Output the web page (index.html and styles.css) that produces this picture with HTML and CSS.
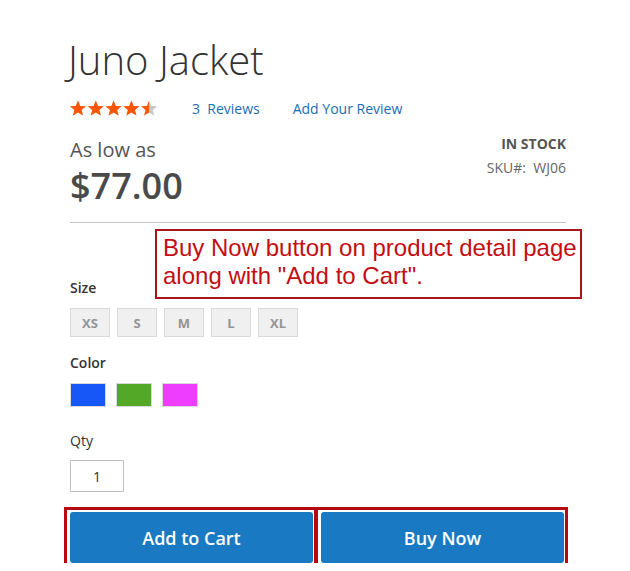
FILE: index.html
```html
<!DOCTYPE html>
<html lang="en">
<head>
    <meta charset="UTF-8">
    <meta name="viewport" content="width=device-width, initial-scale=1.0">
    <title>Juno Jacket</title>
    <link rel="stylesheet" href="styles.css">
</head>
<body>
    <div class="product">
        <h1 class="title">Juno Jacket</h1>

        <div class="reviews">
            <svg class="stars" width="90" height="16" viewBox="0 0 90 16">
                <defs>
                    <polygon id="star" points="9,0.5 11.2,5.9 17,6.2 12.5,9.9 14.1,15.6 9,12.4 3.9,15.6 5.5,9.9 1,6.2 6.8,5.9"/>
                    <clipPath id="rating"><rect x="0" y="0" width="80" height="16"/></clipPath>
                </defs>
                <g fill="#c7c7c7">
                    <use href="#star" x="0"/><use href="#star" x="17.8"/><use href="#star" x="35.6"/><use href="#star" x="53.4"/><use href="#star" x="71.2"/>
                </g>
                <g fill="#ff5501" clip-path="url(#rating)">
                    <use href="#star" x="0"/><use href="#star" x="17.8"/><use href="#star" x="35.6"/><use href="#star" x="53.4"/><use href="#star" x="71.2"/>
                </g>
            </svg>
            <a href="#" class="link">3&nbsp; Reviews</a>
            <a href="#" class="link">Add Your Review</a>
        </div>

        <div class="info">
            <div class="price-box">
                <div class="price-label">As low as</div>
                <div class="price">$77.00</div>
            </div>
            <div class="stock">
                <div class="stock-status">IN STOCK</div>
                <div class="sku">SKU#:&nbsp; WJ06</div>
            </div>
        </div>

        <div class="options">
            <div class="label">Size</div>
            <div class="sizes">
                <span class="size">XS</span>
                <span class="size">S</span>
                <span class="size">M</span>
                <span class="size">L</span>
                <span class="size">XL</span>
            </div>

            <div class="label">Color</div>
            <div class="colors">
                <span class="color blue"></span>
                <span class="color green"></span>
                <span class="color pink"></span>
            </div>

            <div class="label qty-label">Qty</div>
            <input class="qty" type="text" value="1">
        </div>

        <div class="actions">
            <button class="btn marked">Add to Cart</button>
            <button class="btn marked">Buy Now</button>
        </div>

        <div class="note">Buy Now button on product detail page along with "Add to Cart".</div>
    </div>
</body>
</html>
```

FILE: styles.css
```css
body {
    margin: 0;
    font-family: "Open Sans", Arial, sans-serif;
    color: #333;
    background: #fff;
}
.product {
    position: relative;
    width: 496px;
    padding: 38px 0 0 70px;
}
.title {
    margin: 0 0 0 -2px;
    font-size: 40px;
    font-weight: 300;
    line-height: 44px;
    color: #333;
}
.reviews {
    display: flex;
    align-items: center;
    margin-top: 18px;
    height: 16px;
}
.stars {
    display: block;
    margin-left: -1px;
    margin-right: 33px;
}
.link {
    color: #1a6eb3;
    text-decoration: none;
    font-size: 14px;
    margin-right: 33px;
}
.info {
    display: flex;
    justify-content: space-between;
    margin-top: 16px;
    padding-bottom: 14px;
    border-bottom: 1px solid #c6c6c6;
}
.price-box {
    padding-top: 5px;
}
.price-label {
    font-size: 20px;
    line-height: 26px;
    color: #555;
}
.price {
    font-size: 36px;
    font-weight: 600;
    line-height: 44px;
    color: #4a4a4a;
    margin-top: 1px;
}
.stock {
    text-align: right;
    font-size: 14px;
    color: #666;
    padding-top: 2px;
}
.stock-status {
    font-weight: 700;
    color: #555;
    line-height: 20px;
}
.sku {
    line-height: 20px;
    margin-top: 4px;
}
.options {
    padding-top: 55px;
}
.label {
    font-size: 14px;
    font-weight: 600;
    line-height: 20px;
}
.sizes {
    display: flex;
    gap: 7px;
    margin: 10px 0 16px;
}
.size {
    box-sizing: border-box;
    width: 40px;
    height: 29px;
    border: 1px solid #dadada;
    background: #f0f0f0;
    color: #949494;
    font-size: 13px;
    font-weight: 700;
    display: flex;
    align-items: center;
    justify-content: center;
}
.colors {
    display: flex;
    gap: 10px;
    margin: 10px 0 24px;
}
.color {
    box-sizing: border-box;
    width: 36px;
    height: 24px;
    border: 1px solid #dadada;
}
.blue { background: #1857f7; }
.green { background: #53a828; }
.pink { background: #ef3dff; }
.qty-label {
    font-weight: 400;
}
.qty {
    box-sizing: border-box;
    display: block;
    width: 54px;
    height: 32px;
    margin-top: 9px;
    border: 1px solid #c2c2c2;
    font-family: "Open Sans", Arial, sans-serif;
    font-size: 14px;
    color: #333;
    text-align: center;
    padding: 0;
}
.actions {
    display: flex;
    gap: 8px;
    margin-top: 20px;
}
.btn {
    width: 243px;
    height: 51px;
    border: none;
    border-radius: 3px;
    background: #1979c3;
    color: #fff;
    font-family: "Open Sans", Arial, sans-serif;
    font-size: 18px;
    font-weight: 600;
}
.marked {
    position: relative;
}
.marked::after {
    content: "";
    position: absolute;
    top: -5px;
    right: -4px;
    bottom: -4px;
    left: -6px;
    border: 3px solid #b50a0f;
}
.note {
    position: absolute;
    left: 155px;
    top: 229px;
    width: 417px;
    height: 63px;
    padding: 3px 0 0 6px;
    border: 2px solid #a8141a;
    font-family: "Liberation Sans", Arial, sans-serif;
    font-size: 24px;
    line-height: 28px;
    color: #c40d12;
}
```
